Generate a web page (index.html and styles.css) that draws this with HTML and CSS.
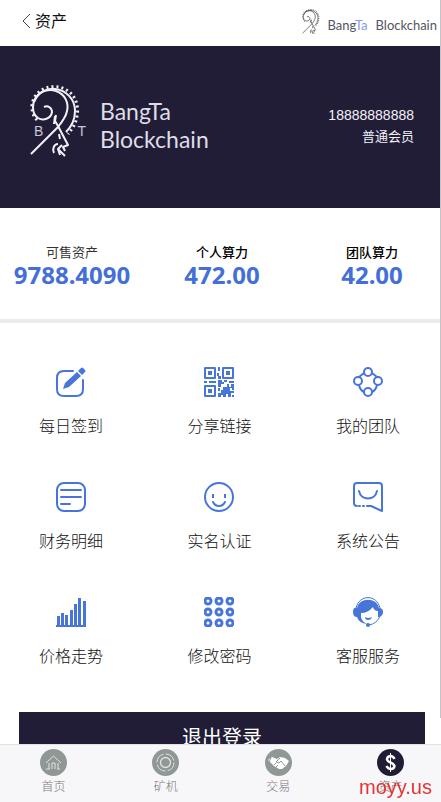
FILE: index.html
```html
<!DOCTYPE html>
<html lang="zh-CN">
<head>
    <meta charset="UTF-8">
    <meta name="viewport" content="width=device-width, initial-scale=1.0">
    <title>资产</title>
    <link rel="stylesheet" href="styles.css">
</head>
<body>
    <svg class="defs" aria-hidden="true">
        <symbol id="ram" viewBox="0 0 56 74">
            <g fill="none" stroke="currentColor" stroke-linejoin="round">
                <path stroke-width="2" d="M14 22C18 20 22 23 22 27C21 34 13 36 8 33C1 28 2 17 7 11C12 5 20 4 26 6C35 9 39 18 37 26C36 32 32 37 28 42L1 69"/>
                <path stroke-width="2" d="M4 17C8 8 16 3 25 4C36 5 45 14 45 26C45 34 41 42 36 47"/>
                <path stroke-width="3" stroke-dasharray="2 3" d="M7 35C-1 27 1 13 9 7C17 0 30 0 38 6C46 11 49 22 47 31C46 39 42 44 38 49"/>
                <path stroke-width="2" d="M26 30L25 36L28 41L38 60L33 62L35 66M25 31L24 39M29 49L30 54"/>
                <path stroke-width="2" d="M28 59C24 59 22 64 24 68M32 60L28 64L35 71M28 64L30 70"/>
            </g>
        </symbol>
    </svg>

    <header class="header">
        <a class="back" href="#">
            <svg width="10" height="16" viewBox="0 0 10 16"><path d="M8 1L1 8L8 15" fill="none" stroke="#444"/></svg>
            <span>资产</span>
        </a>
        <div class="brand">
            <svg class="brand-ram" width="20" height="26"><use href="#ram"/></svg>
            <span>Bang<b>Ta</b></span>
            <span>Blockchain</span>
        </div>
    </header>

    <section class="banner">
        <div class="logo">
            <div class="emblem">
                <svg width="56" height="74"><use href="#ram"/></svg>
                <span class="letter-b">B</span>
                <span class="letter-t">T</span>
            </div>
            <div class="logo-name">BangTa<br>Blockchain</div>
        </div>
        <div class="user">
            <div class="phone">18888888888</div>
            <div>普通会员</div>
        </div>
    </section>

    <section class="stats">
        <div class="stat"><span>可售资产</span><strong>9788.4090</strong></div>
        <div class="stat dark"><span>个人算力</span><strong>472.00</strong></div>
        <div class="stat dark"><span>团队算力</span><strong>42.00</strong></div>
    </section>

    <main>
        <div class="menu">
            <a href="#">
                <svg viewBox="0 0 30 30"><path class="line" d="M17 4H8Q1 4 1 11V22Q1 29 8 29H20Q27 29 27 22V13"/><path class="fill" d="M7 22L9 16L21 5L25 9L13 20ZM22 4L25 1Q26 0 27 1L29 3Q30 4 29 5L26 8Z"/></svg>
                每日签到
            </a>
            <a href="#">
                <svg viewBox="0 0 30 30"><path class="line" d="M1 1H11V11H1ZM19 1H29V11H19ZM1 19H11V29H1Z"/><path class="fill" d="M4 4H8V8H4ZM22 4H26V8H22ZM4 22H8V26H4ZM14 0H16V4H14ZM13 6H15V9H17V12H14V9H13ZM0 14H3V16H0ZM5 14H12V16H5ZM14 13H18V15H20V17H17V20H14ZM20 13H23V15H20ZM25 14H30V16H25ZM23 17H25V20H27V17H30V23H28V21H26V24H30V26H27V30H24V27H22V30H19V28H17V30H14V26H17V23H19V20H23ZM14 21H16V24H14ZM28 28H30V30H28Z"/></svg>
                分享链接
            </a>
            <a href="#">
                <svg viewBox="0 0 30 30"><g class="line"><circle cx="15" cy="5" r="4"/><circle cx="5" cy="14" r="4"/><circle cx="25" cy="14" r="4"/><circle cx="15" cy="25" r="4"/><path d="M11 6L6 10M19 6L24 10M6 18Q7 23 11 25M24 18Q23 23 19 25"/></g></svg>
                我的团队
            </a>
            <a href="#">
                <svg viewBox="0 0 30 30"><g class="line"><rect x="1" y="1" width="28" height="28" rx="7"/><path d="M5 8H25M5 15H25M5 22H14"/></g></svg>
                财务明细
            </a>
            <a href="#">
                <svg viewBox="0 0 30 30"><g class="line"><circle cx="15" cy="15" r="14"/><path d="M9 20Q11 24 15 24T21 20"/></g><path class="fill" d="M8 12H10V16H8ZM20 12H22V16H20Z"/></svg>
                实名认证
            </a>
            <a href="#">
                <svg viewBox="0 0 30 30"><g class="line"><path d="M4 24Q1 24 1 21V4Q1 1 4 1H26Q29 1 29 4V29L18 24H14M6 24H7M10 24H11"/><path d="M6 9C8 19 22 19 24 9"/></g></svg>
                系统公告
            </a>
            <a href="#">
                <svg viewBox="0 0 30 30"><path class="fill" d="M0 28H30V30H0ZM1 19H4V28H1ZM5 16H8V28H5ZM9 18H12V28H9ZM14 13H17V28H14ZM18 7H21V28H18ZM22 1H25V28H22ZM27 4H30V28H27Z"/></svg>
                价格走势
            </a>
            <a href="#">
                <svg viewBox="0 0 30 30"><g class="line bold"><circle cx="4" cy="4" r="3"/><circle cx="15" cy="4" r="3"/><circle cx="26" cy="4" r="3"/><circle cx="4" cy="15" r="3"/><circle cx="15" cy="15" r="3"/><circle cx="26" cy="15" r="3"/><circle cx="4" cy="26" r="3"/><circle cx="15" cy="26" r="3"/><circle cx="26" cy="26" r="3"/></g></svg>
                修改密码
            </a>
            <a href="#">
                <svg viewBox="0 0 30 30"><path class="line thin" d="M3 11C6 -3 24 -3 27 11M27 19Q24 27 16 28"/><path class="fill" d="M4 11C6 0 24 0 26 11Q30 11 30 15T26 20H25V14Q21 14 20 10Q15 16 8 16V20Q9 25 14 27Q6 26 4 20Q0 20 0 15T4 11ZM12 20Q15 22 19 20Q18 23 15 23T12 20Z"/><circle class="fill" cx="15" cy="28" r="2"/></svg>
                客服服务
            </a>
        </div>
        <button class="logout" type="button">退出登录</button>
    </main>

    <nav class="tabbar">
        <a href="#">
            <svg viewBox="0 0 27 27"><circle cx="13.5" cy="13.5" r="13.5" fill="#909896"/><path d="M6 14L13.5 7L21 14M9 14V20M18 14V20M12 20V14H15V20M6 20H10M17 20H20" fill="none" stroke="#dfe3e2"/></svg>
            首页
        </a>
        <a href="#">
            <svg viewBox="0 0 27 27"><circle cx="13.5" cy="13.5" r="13.5" fill="#909896"/><g fill="none" stroke="#dfe3e2"><circle cx="13.5" cy="13.5" r="8.5" stroke-dasharray="11 2.35"/><circle cx="13.5" cy="13.5" r="5" stroke-width="1.3"/></g></svg>
            矿机
        </a>
        <a href="#">
            <svg viewBox="0 0 27 27"><circle cx="13.5" cy="13.5" r="13.5" fill="#909896"/><path d="M3 11L7 8L12 10L15 8L20 9L24 12L21 17L17 20L14 20L9 17L7 15Z" fill="#fff"/><path d="M6 9L4 13M15 9L11 13L14 14L16 12L20 17M9 16L11 14M11 18L13 16" fill="none" stroke="#909896"/></svg>
            交易
        </a>
        <a href="#">
            <svg viewBox="0 0 27 27"><circle cx="13.5" cy="13.5" r="13.5" fill="#221d37"/><path d="M17.5 10Q16 7 13.5 7Q10 7.5 10 10.500Q10.500 12.500 13.500 13.500T17.500 17Q17 20 14 20Q11 20 9.500 17" fill="none" stroke="#fff" stroke-width="2.5"/><path d="M13.5 4V23" stroke="#fff"/></svg>
            资产
        </a>
    </nav>
    <div class="watermark">moyy.us</div>
    <div class="scrollbar"></div>
</body>
</html>
```
FILE: styles.css
```css
* { box-sizing: border-box; }
body { margin: 0; background: #fff; color: #333; font-family: "Liberation Sans", "Noto Sans CJK SC", sans-serif; }
a { color: inherit; text-decoration: none; }
.defs { position: absolute; width: 0; height: 0; }

.header { display: flex; justify-content: space-between; align-items: center; height: 46px; padding: 0 4px 4px 22px; }
.back { display: flex; align-items: center; gap: 3px; font-size: 16px; line-height: 24px; color: #111; }
.back span { padding-top: 2px; }
.brand { display: flex; align-items: center; gap: 8px; font-family: Lato, sans-serif; font-size: 13px; line-height: 16px; color: #555463; padding-top: 2px; }
.brand span { padding-top: 6px; }
.brand b { font-weight: normal; color: #7f9bea; }
.brand-ram { color: #444; margin-right: -3px; }

.banner { display: flex; justify-content: space-between; align-items: center; height: 162px; padding: 0 27px 0 30px; background: #221d37; color: #f2f1f7; }
.logo { display: flex; align-items: center; gap: 14px; padding-bottom: 10px; }
.emblem { position: relative; height: 74px; }
.letter-b, .letter-t { position: absolute; top: 37px; font-size: 14px; line-height: 18px; color: #c9c7d6; }
.letter-b { left: 4px; }
.letter-t { right: 0; }
.logo-name { font-family: Lato, sans-serif; font-size: 23px; line-height: 28px; padding-top: 6px; color: #dedde8; }
.user { font-size: 13px; line-height: 21px; text-align: right; padding-bottom: 2px; }
.phone { font-size: 14px; }

.stats { display: flex; justify-content: space-between; padding: 37px 11px 30px 14px; border-bottom: 4px solid #ebebeb; }
.stat { width: 116px; display: flex; flex-direction: column; align-items: center; font-size: 13px; line-height: 16px; }
.stat strong { font-family: "Noto Sans", sans-serif; font-size: 24px; line-height: 28px; color: #446fd9; }
.dark { color: #000; font-weight: 500; }

.menu { display: grid; grid-template-columns: repeat(3, auto); justify-content: space-between; row-gap: 43px; padding: 44px 41px 43px 39px; }
.menu a { display: flex; flex-direction: column; align-items: center; gap: 18px; font-size: 16px; line-height: 24px; font-weight: 300; color: #111; }
.menu svg { width: 30px; height: 30px; }
.line { fill: none; stroke: #4775d9; stroke-width: 2; stroke-linecap: round; stroke-linejoin: round; }
.bold { stroke-width: 3; }
.thin { stroke-width: 1; }
.fill { fill: #4775d9; }

.logout { display: block; width: calc(100% - 35px); height: 52px; margin: 0 16px 38px 19px; padding: 0; border: 0; background: #221d37; color: #fff; font-family: inherit; font-size: 20px; line-height: 28px; }

.tabbar { position: fixed; left: 0; right: 0; bottom: 0; display: flex; justify-content: space-between; height: 58px; padding: 4px 37px 0 40px; border-top: 1px solid #e2e2e5; background: #f7f7fa; }
.tabbar a { display: flex; flex-direction: column; align-items: center; gap: 2px; font-size: 12px; line-height: 18px; color: #777; font-weight: 300; }
.tabbar svg { width: 27px; height: 27px; }

.watermark { position: fixed; right: 9px; bottom: 3px; font-size: 20px; line-height: 24px; color: #e83232; }
.scrollbar { position: fixed; top: 0; right: 0; bottom: 84px; width: 1px; background: #c4c4c8; }
```
